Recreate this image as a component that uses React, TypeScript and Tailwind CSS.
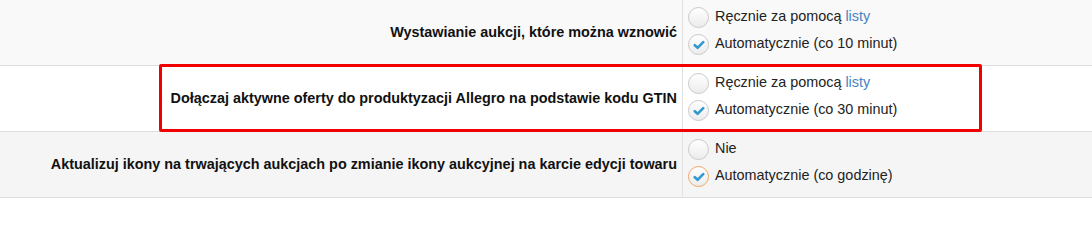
import React from 'react';

type Option = { text: string; link?: string; checked?: boolean; focus?: boolean };
type Row = { label: string; bg: string; options: Option[] };

const rows: Row[] = [
  {
    label: 'Wystawianie aukcji, które można wznowić',
    bg: 'bg-[#f9f9f9]',
    options: [
      { text: 'Ręcznie za pomocą ', link: 'listy' },
      { text: 'Automatycznie (co 10 minut)', checked: true },
    ],
  },
  {
    label: 'Dołączaj aktywne oferty do produktyzacji Allegro na podstawie kodu GTIN',
    bg: 'bg-white',
    options: [
      { text: 'Ręcznie za pomocą ', link: 'listy' },
      { text: 'Automatycznie (co 30 minut)', checked: true },
    ],
  },
  {
    label: 'Aktualizuj ikony na trwających aukcjach po zmianie ikony aukcyjnej na karcie edycji towaru',
    bg: 'bg-[#f5f5f5]',
    options: [
      { text: 'Nie' },
      { text: 'Automatycznie (co godzinę)', checked: true, focus: true },
    ],
  },
];

function Radio({ checked, focus }: { checked?: boolean; focus?: boolean }) {
  return (
    <span
      className={`flex h-[21px] w-[21px] shrink-0 items-center justify-center rounded-full border bg-gradient-to-b from-white to-[#ececec] ${
        focus ? 'border-[#f0a668]' : 'border-[#c9c9c9]'
      }`}
    >
      {checked && (
        <svg width="12" height="10" viewBox="0 0 12 10">
          <path d="M1.8 5.2 L4.6 7.8 L10.2 2.2" fill="none" stroke="#3399cc" strokeWidth="2.6" strokeLinecap="round" strokeLinejoin="round" />
        </svg>
      )}
    </span>
  );
}

export default function App() {
  return (
    <div className="relative w-[1092px] font-['Liberation_Sans',Arial,sans-serif] text-[14.4px]">
      {rows.map((row, i) => (
        <div key={i} className={`grid h-[66px] grid-cols-[682px_1fr] border-b border-[#dedede] ${row.bg}`}>
          <div className="flex items-center justify-end pr-[5px] font-bold text-[#111]">{row.label}</div>
          <div className="flex flex-col gap-[6px] border-l border-[#e2e2e2] pl-[5px] pt-[7px]">
            {row.options.map((opt, j) => (
              <div key={j} className="flex h-[21px] items-center gap-[6px] text-[#222]">
                <Radio checked={opt.checked} focus={opt.focus} />
                <span className="-mt-[2px]">
                  {opt.text}
                  {opt.link && <span className="text-[#4a84c4]">{opt.link}</span>}
                </span>
              </div>
            ))}
          </div>
        </div>
      ))}
      {/* highlight */}
      <div className="pointer-events-none absolute left-[159px] top-[64px] h-[68px] w-[823px] rounded-[2px] border-[3px] border-[#f20000]" />
    </div>
  );
}
